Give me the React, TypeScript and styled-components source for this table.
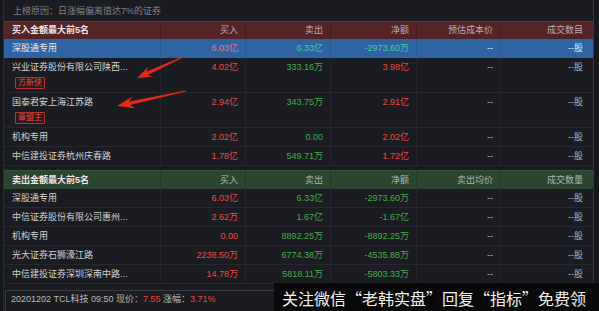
import React from 'react';
import styled, { createGlobalStyle } from 'styled-components';

const GlobalStyle = createGlobalStyle`
  html, body {
    margin: 0;
    padding: 0;
    background: #1b1c21;
  }
  body {
    font-family: "Liberation Sans", "Noto Sans CJK SC", sans-serif;
    font-size: 9px;
    color: #c8c8c8;
  }
`;

type Tone = 'red' | 'green' | 'plain' | 'dim';

interface Seat {
  name: string;
  buy: string;
  sell: string;
  net: string;
  netTone: Tone;
  tag?: string;
  selected?: boolean;
}

const buySeats: Seat[] = [
  { name: '深股通专用', buy: '6.03亿', sell: '6.33亿', net: '-2973.60万', netTone: 'green', selected: true },
  { name: '兴业证券股份有限公司陕西...', buy: '4.02亿', sell: '333.16万', net: '3.98亿', netTone: 'red', tag: '方新侠' },
  { name: '国泰君安上海江苏路', buy: '2.94亿', sell: '343.75万', net: '2.91亿', netTone: 'red', tag: '章盟主' },
  { name: '机构专用', buy: '2.02亿', sell: '0.00', net: '2.02亿', netTone: 'red' },
  { name: '中信建投证券杭州庆春路', buy: '1.78亿', sell: '549.71万', net: '1.72亿', netTone: 'red' },
];

const sellSeats: Seat[] = [
  { name: '深股通专用', buy: '6.03亿', sell: '6.33亿', net: '-2973.60万', netTone: 'green' },
  { name: '中信证券股份有限公司惠州...', buy: '2.62万', sell: '1.67亿', net: '-1.67亿', netTone: 'green' },
  { name: '机构专用', buy: '0.00', sell: '8892.25万', net: '-8892.25万', netTone: 'green' },
  { name: '光大证券石狮濠江路', buy: '2238.50万', sell: '6774.38万', net: '-4535.88万', netTone: 'green' },
  { name: '中信建投证券深圳深南中路...', buy: '14.78万', sell: '5818.11万', net: '-5803.33万', netTone: 'green' },
];

const toneColor = (tone: Tone, selected?: boolean) => {
  if (selected) {
    if (tone === 'red') return '#f2718a';
    if (tone === 'green') return '#4cc8a6';
    return '#e6e9ee';
  }
  if (tone === 'red') return '#ea4a42';
  if (tone === 'green') return '#43ad4d';
  if (tone === 'dim') return '#b4b4b4';
  return '#cfcfcf';
};

const Page = styled.div`
  position: relative;
  width: 599px;
  height: 311px;
  overflow: hidden;
  padding: 0 5px 0 3px;
  box-sizing: border-box;
  background: #16171b;
`;

const Frame = styled.div`
  height: 100%;
  display: flex;
  flex-direction: column;
  background: #1b1c21;
  border-left: 1px solid #2b2c32;
  border-right: 1px solid #35363c;
`;

const Reason = styled.div`
  height: 21px;
  line-height: 23px;
  padding-left: 9px;
  color: #80828a;
  flex-shrink: 0;
`;

const Section = styled.div`
  display: flex;
  flex-direction: column;
  flex-shrink: 0;
`;

const columns = '156px 85px 85px 86px 84px 1fr';

const HeaderRow = styled.div<{ $kind: 'buy' | 'sell' }>`
  display: grid;
  grid-template-columns: ${columns};
  height: ${({ $kind }) => ($kind === 'buy' ? '17px' : '18px')};
  line-height: ${({ $kind }) => ($kind === 'buy' ? '17px' : '18px')};
  background: ${({ $kind }) => ($kind === 'buy' ? '#552426' : '#2b4531')};
  color: ${({ $kind }) => ($kind === 'buy' ? '#bcaaaa' : '#a8b9aa')};
  border-top: 1px solid ${({ $kind }) => ($kind === 'buy' ? '#6a2e30' : '#36553d')};
`;

const HeaderTitle = styled.div`
  padding-left: 8px;
  font-weight: bold;
  color: #efe4e4;
`;

const HeaderCell = styled.div`
  text-align: right;
  padding-right: 7px;
  border-left: 1px solid rgba(0, 0, 0, 0.18);

  &:last-child {
    padding-right: 10px;
  }
`;

const Row = styled.div<{ $selected?: boolean }>`
  display: grid;
  grid-template-columns: ${columns};
  align-items: start;
  background: ${({ $selected }) => ($selected ? '#2d64a1' : 'transparent')};
  border-bottom: 1px solid ${({ $selected }) => ($selected ? '#2d64a1' : '#27282d')};
`;

const NameCell = styled.div<{ $selected?: boolean }>`
  display: flex;
  flex-direction: column;
  align-items: flex-start;
  padding-left: 8px;
  line-height: 18px;
  color: ${({ $selected }) => ($selected ? '#e8ecf2' : '#d2d2d2')};
  white-space: nowrap;
`;

const Tag = styled.span`
  margin: 1px 0 3px 3px;
  height: 10px;
  line-height: 10px;
  padding: 0 2px;
  font-size: 8px;
  color: #e6473f;
  background: #2a1b1d;
  border: 1px solid #b8322e;
  border-radius: 1px;
`;

const Cell = styled.div<{ $tone: Tone; $selected?: boolean }>`
  align-self: stretch;
  text-align: right;
  padding-right: 7px;
  line-height: 18px;
  white-space: nowrap;
  color: ${({ $tone, $selected }) => toneColor($tone, $selected)};
  border-left: 1px solid ${({ $selected }) => ($selected ? '#2a5a90' : '#25262b')};

  &:last-child {
    padding-right: 10px;
  }
`;

const Gap = styled.div`
  height: 4px;
  flex-shrink: 0;
`;

const BottomBar = styled.div`
  margin: 6px 0 0 1px;
  height: 20px;
  line-height: 17px;
  padding-left: 5px;
  border: 1px solid #3a3b41;
  border-radius: 2px;
  color: #b9b9b9;
  white-space: nowrap;
  flex-shrink: 0;
`;

const Quote = styled.span`
  color: #e8453e;
`;

const Watermark = styled.div`
  position: absolute;
  right: 0;
  bottom: 0;
  width: 325px;
  height: 28px;
  padding-left: 8px;
  box-sizing: border-box;
  background: rgba(8, 8, 9, 0.94);
  color: #f2f2f2;
  font-family: "Noto Sans CJK SC", sans-serif;
  font-size: 16px;
  line-height: 30px;
  white-space: nowrap;
`;

const Overlay = styled.svg`
  position: absolute;
  left: 0;
  top: 0;
  pointer-events: none;
`;

const arrowPoints = (tx: number, ty: number, hx: number, hy: number, head: number, half: number) => {
  const dx = hx - tx;
  const dy = hy - ty;
  const len = Math.hypot(dx, dy);
  const ux = dx / len;
  const uy = dy / len;
  const nx = -uy;
  const ny = ux;
  const bx = hx - ux * head;
  const by = hy - uy * head;
  const pts: [number, number][] = [
    [tx + nx * 0.6, ty + ny * 0.6],
    [bx + ux * 2 + nx * 1.8, by + uy * 2 + ny * 1.8],
    [bx - ux * 2 + nx * half, by - uy * 2 + ny * half],
    [hx, hy],
    [bx - ux * 2 - nx * half, by - uy * 2 - ny * half],
    [bx + ux * 2 - nx * 1.8, by + uy * 2 - ny * 1.8],
    [tx - nx * 0.6, ty - ny * 0.6],
  ];
  return pts.map(([x, y]) => `${x.toFixed(1)},${y.toFixed(1)}`).join(' ');
};

const SeatRow: React.FC<{ seat: Seat }> = ({ seat }) => (
  <Row $selected={seat.selected}>
    <NameCell $selected={seat.selected}>
      {seat.name}
      {seat.tag && <Tag>{seat.tag}</Tag>}
    </NameCell>
    <Cell $tone="red" $selected={seat.selected}>{seat.buy}</Cell>
    <Cell $tone="green" $selected={seat.selected}>{seat.sell}</Cell>
    <Cell $tone={seat.netTone} $selected={seat.selected}>{seat.net}</Cell>
    <Cell $tone="dim" $selected={seat.selected}>--</Cell>
    <Cell $tone="dim" $selected={seat.selected}>--股</Cell>
  </Row>
);

const App: React.FC = () => (
  <>
    <GlobalStyle />
    <Page>
      <Frame>
        <Reason>上榜原因：日涨幅偏离值达7%的证券</Reason>

        <Section>
          <HeaderRow $kind="buy">
            <HeaderTitle>买入金额最大前5名</HeaderTitle>
            <HeaderCell>买入</HeaderCell>
            <HeaderCell>卖出</HeaderCell>
            <HeaderCell>净额</HeaderCell>
            <HeaderCell>预估成本价</HeaderCell>
            <HeaderCell>成交数目</HeaderCell>
          </HeaderRow>
          {buySeats.map((seat, i) => (
            <SeatRow key={i} seat={seat} />
          ))}
        </Section>

        <Gap />

        <Section>
          <HeaderRow $kind="sell">
            <HeaderTitle>卖出金额最大前5名</HeaderTitle>
            <HeaderCell>买入</HeaderCell>
            <HeaderCell>卖出</HeaderCell>
            <HeaderCell>净额</HeaderCell>
            <HeaderCell>卖出均价</HeaderCell>
            <HeaderCell>成交数量</HeaderCell>
          </HeaderRow>
          {sellSeats.map((seat, i) => (
            <SeatRow key={i} seat={seat} />
          ))}
        </Section>

        <BottomBar>
          20201202 TCL科技 09:50 现价：<Quote>7.55</Quote> 涨幅：<Quote>3.71%</Quote>
        </BottomBar>
      </Frame>

      <Overlay width={599} height={311} viewBox="0 0 599 311">
        <polygon points={arrowPoints(183, 57, 137, 78, 13, 5.5)} fill="#e4281e" />
        <polygon points={arrowPoints(186, 91, 117, 106, 15, 6)} fill="#e4281e" />
      </Overlay>

      <Watermark>关注微信“老韩实盘”回复“指标”免费领</Watermark>
    </Page>
  </>
);

export default App;
